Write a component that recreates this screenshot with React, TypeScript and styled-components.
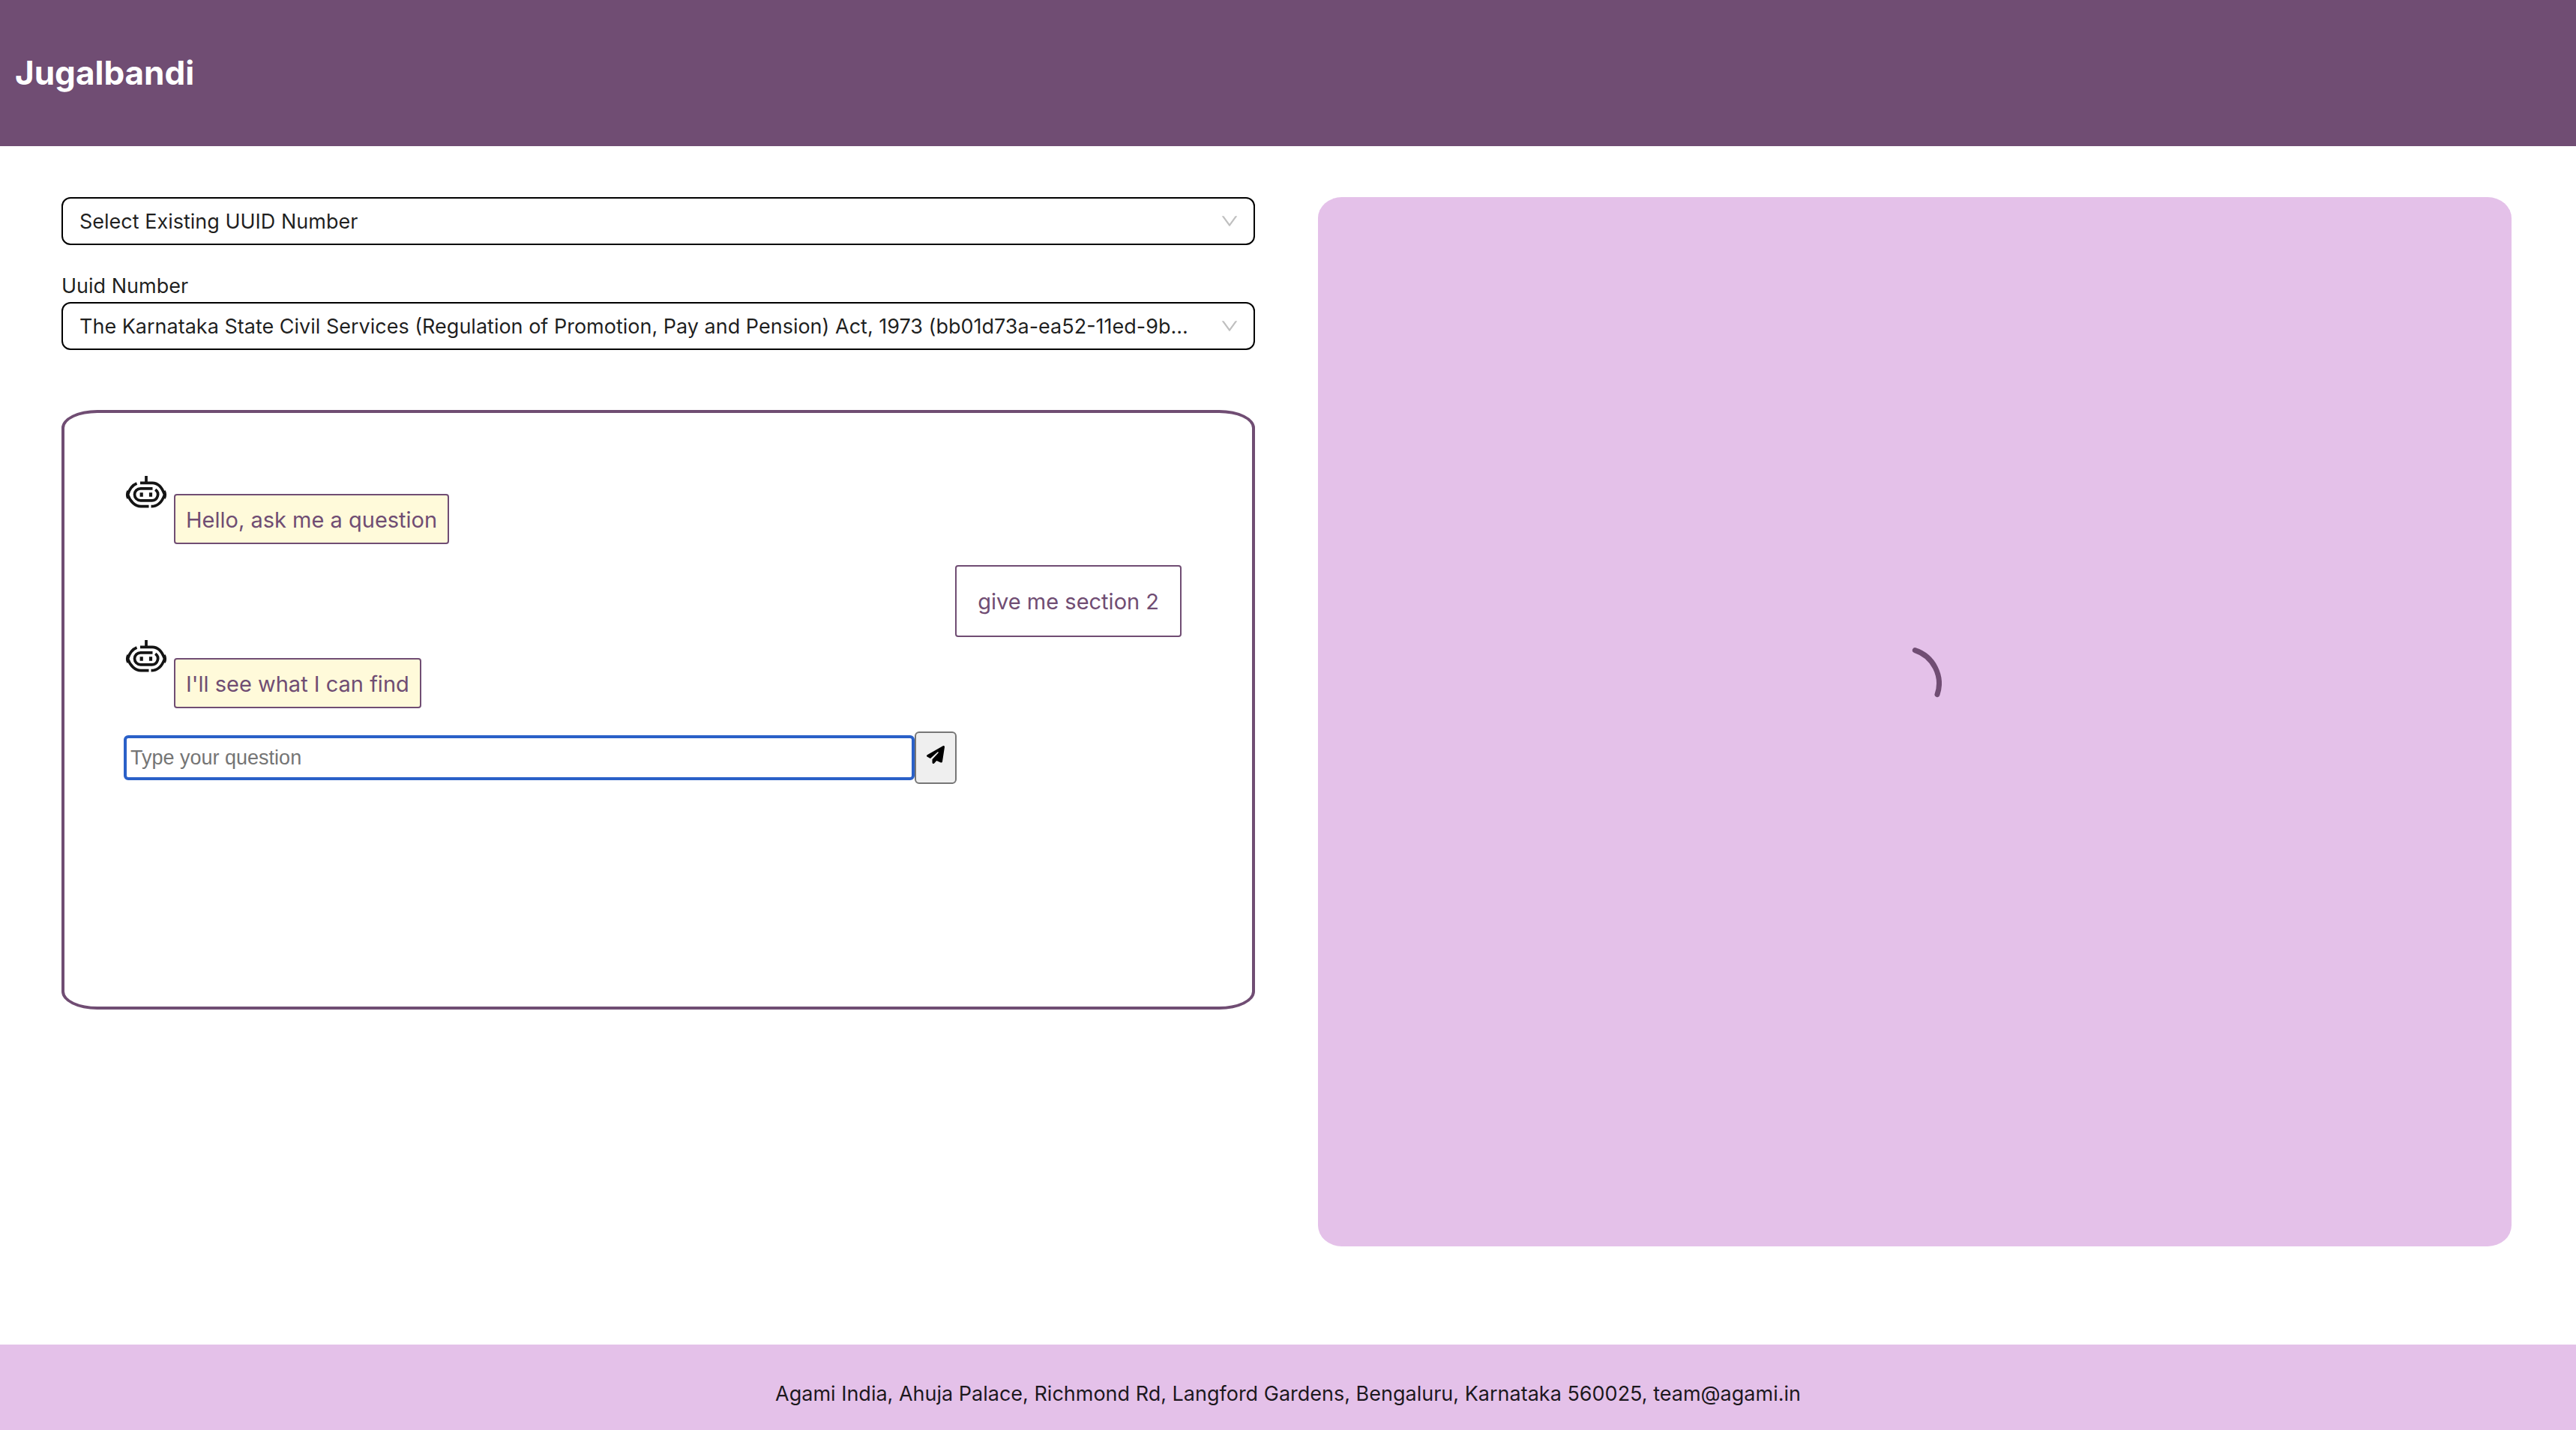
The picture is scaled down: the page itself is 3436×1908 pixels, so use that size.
import React from "react";
import styled, { createGlobalStyle } from "styled-components";

const plum = "#704d73";
const lilac = "#e4c1e9";

const GlobalStyle = createGlobalStyle`
  *, *::before, *::after { box-sizing: border-box; }
  body {
    margin: 0;
    background: #fff;
    color: rgba(0, 0, 0, 0.88);
    font-family: Inter, "Liberation Sans", sans-serif;
    font-size: 27px;
    line-height: 44px;
  }
`;

const Page = styled.div`
  display: flex;
  flex-direction: column;
  min-height: 100vh;
`;

const Header = styled.header`
  display: flex;
  align-items: center;
  padding: 68px 20px;
  background: ${plum};
`;

const Title = styled.h1`
  margin: 0;
  color: #fff;
  font-size: 44px;
  line-height: 59px;
  font-weight: 700;
`;

const Main = styled.main`
  flex: 1;
  display: grid;
  grid-template-columns: 1fr 1fr;
  align-items: start;
  gap: 84px;
  padding: 68px 86px 68px 82px;
`;

const Column = styled.div`
  display: flex;
  flex-direction: column;
  min-width: 0;
`;

const Field = styled.div`
  display: flex;
  flex-direction: column;
`;

const Label = styled.label`
  padding: 33px 0 0;
  line-height: 43px;
`;

const SelectBox = styled.div`
  display: grid;
  align-items: center;
`;

const Select = styled.select`
  grid-area: 1 / 1;
  width: 100%;
  height: 64px;
  padding: 2px 60px 0 22px;
  border: 2px solid #000;
  border-radius: 12px;
  background: #fff;
  color: inherit;
  font: inherit;
  text-overflow: ellipsis;
  appearance: none;
`;

const Arrow = styled.svg`
  grid-area: 1 / 1;
  justify-self: end;
  width: 24px;
  height: 24px;
  margin-right: 22px;
  pointer-events: none;
`;

const Chat = styled.section`
  display: flex;
  flex-direction: column;
  min-height: 800px;
  margin-top: 80px;
  padding: 80px 80px 80px 79px;
  border: 4px solid ${plum};
  border-radius: 3%;
  color: ${plum};
  font-size: 29px;
`;

const BotMessage = styled.div`
  display: flex;
  align-items: flex-start;
  gap: 7px;
`;

const BotIcon = styled.svg`
  width: 60px;
  height: 60px;
`;

const BotBubble = styled.p`
  margin: 28px 0;
  padding: 11px 14px 9px;
  border: 2px solid ${plum};
  border-radius: 4px;
  background: #fffada;
  line-height: 43px;
`;

const UserBubble = styled.p`
  align-self: flex-end;
  margin: 0 14px 0 0;
  padding: 25px 28px 23px;
  border: 2px solid ${plum};
  border-radius: 4px;
  line-height: 44px;
`;

const AskForm = styled.form`
  display: flex;
  align-items: center;
  margin-top: 3px;
`;

const Question = styled.input`
  width: 1055px;
  height: 60px;
  padding: 0 5px;
  border: 4px solid #2a60c8;
  border-radius: 6px;
  outline: none;
  background: #fff;
  font-family: "Liberation Sans", Arial, sans-serif;
  font-size: 27px;
  &::placeholder { color: #757575; opacity: 1; }
`;

const Send = styled.button`
  display: flex;
  justify-content: center;
  width: 56px;
  height: 70px;
  padding: 17px 0;
  border: 2px solid #767676;
  border-radius: 6px;
  background: #efefef;
  color: #000;
`;

const Result = styled.section`
  display: flex;
  align-items: center;
  justify-content: center;
  height: 1400px;
  padding: 0 28px 102px 0;
  border-radius: 2%;
  background: ${lilac};
`;

const Spinner = styled.svg`
  width: 100px;
  height: 100px;
`;

const Footer = styled.footer`
  padding: 44px 24px 26px;
  background: ${lilac};
  text-align: center;
`;

const Mail = styled.a`
  color: inherit;
  text-decoration: none;
`;

function DownArrow() {
  return (
    <Arrow viewBox="64 64 896 896" fill="rgba(0,0,0,0.25)" aria-hidden="true">
      <path d="M884 256h-75c-5.100 0-9.900 2.500-12.900 6.600L512 654.200 227.900 262.600c-3-4.100-7.800-6.600-12.900-6.600h-75c-6.500 0-10.300 7.400-6.500 12.700l352.600 486.100c12.800 17.600 39 17.600 51.700 0l352.600-486.100c3.900-5.300.1-12.700-6.400-12.700z" />
    </Arrow>
  );
}

function Bot() {
  return (
    <BotIcon viewBox="0 0 60 60" fill="none" stroke="#141414" strokeWidth="3.700" role="img" aria-label="Bot">
      <path d="M30 4v9.500M22 13.300H38C46 13.300 51.500 20 54.500 29C51.500 38 46 44.700 36.500 44.700" />
      <path d="M17.500 14C11 16.500 7.500 22 5.500 29C8.500 38 15 44.700 23 44.700H33.500" />
      <path d="M6 24Q3.500 29 6 34M54 24Q56.500 29 54 34" />
      <path d="M38.500 20.800H22.500a8 8 0 0 0 0 16H37.500a8 8 0 0 0 4.700-14.500" />
      <path d="M23.700 26.300v5.500M36 26.300v5.500" strokeWidth="4.200" />
    </BotIcon>
  );
}

export default function App() {
  return (
    <Page>
      <GlobalStyle />
      <Header>
        <Title>Jugalbandi</Title>
      </Header>
      <Main>
        <Column>
          <SelectBox>
            <Select aria-label="Source">
              <option>Select Existing UUID Number</option>
            </Select>
            <DownArrow />
          </SelectBox>
          <Field>
            <Label htmlFor="uuid">Uuid Number</Label>
            <SelectBox>
              <Select id="uuid">
                <option>The Karnataka State Civil Services (Regulation of Promotion, Pay and Pension) Act, 1973 (bb01d73a-ea52-11ed-9b...</option>
              </Select>
              <DownArrow />
            </SelectBox>
          </Field>
          <Chat>
            <BotMessage>
              <Bot />
              <BotBubble>Hello, ask me a question</BotBubble>
            </BotMessage>
            <UserBubble>give me section 2</UserBubble>
            <BotMessage>
              <Bot />
              <BotBubble>I'll see what I can find</BotBubble>
            </BotMessage>
            <AskForm onSubmit={(e) => e.preventDefault()}>
              <Question aria-label="Question" placeholder="Type your question" />
              <Send type="submit" aria-label="Send">
                <svg width="24" height="24" viewBox="0 0 512 512" fill="currentColor" aria-hidden="true">
                  <path d="M498.100 5.600c10.100 7 15.400 19.100 13.500 31.200l-64 416c-1.500 9.700-7.400 18.200-16 23s-18.900 5.400-28 1.600L284 427.700l-68.500 74.100c-8.900 9.700-22.900 12.900-35.200 8.100S160 493.200 160 480V396.400c0-4 1.500-7.800 4.200-10.700L331.800 202.800c5.800-6.300 5.600-16-.4-22s-15.700-6.400-22-.7L106 360.800 17.700 316.600C7.100 311.300 .3 300.700 0 288.900s5.900-22.800 16.100-28.700l448-256c10.700-6.100 23.900-5.500 34 1.400z" />
                </svg>
              </Send>
            </AskForm>
          </Chat>
        </Column>
        <Result aria-label="Result" aria-busy="true">
          <Spinner viewBox="0 0 100 100" fill="none" stroke={plum} strokeWidth="7" strokeLinecap="round" role="img" aria-label="Loading">
            <path d="M64.300 5.700A46.500 46.500 0 0 1 94 64.700" />
          </Spinner>
        </Result>
      </Main>
      <Footer>
        Agami India, Ahuja Palace, Richmond Rd, Langford Gardens, Bengaluru, Karnataka 560025, <Mail href="mailto:team@agami.in">team@agami.in</Mail>
      </Footer>
    </Page>
  );
}
